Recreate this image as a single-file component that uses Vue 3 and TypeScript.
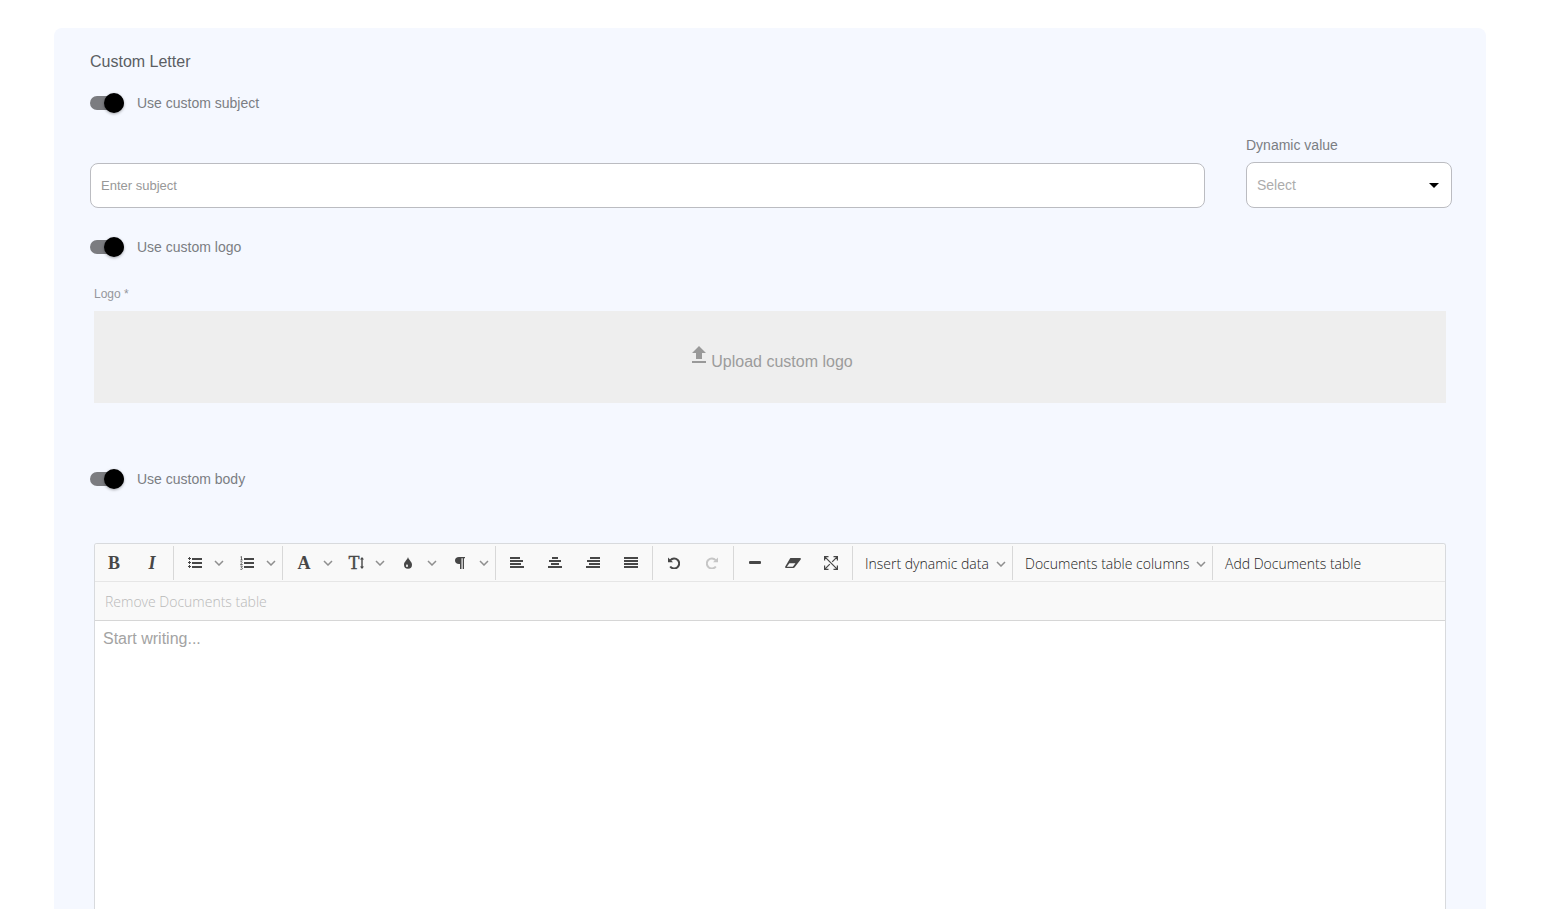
<script setup lang="ts">
import { ref } from 'vue'

interface Tool {
  id: string
  label: string
  split?: boolean
  disabled?: boolean
}

const useSubject = ref(true)
const useLogo = ref(true)
const useBody = ref(true)
const subject = ref('')
const dynamicValue = ref('')
const body = ref('')

const groups: Tool[][] = [
  [
    { id: 'bold', label: 'Bold' },
    { id: 'italic', label: 'Italic' },
  ],
  [
    { id: 'bullets', label: 'Bulleted list', split: true },
    { id: 'numbers', label: 'Numbered list', split: true },
  ],
  [
    { id: 'font', label: 'Font family', split: true },
    { id: 'size', label: 'Font size', split: true },
    { id: 'color', label: 'Colors', split: true },
    { id: 'paragraph', label: 'Paragraph format', split: true },
  ],
  [
    { id: 'left', label: 'Align left' },
    { id: 'center', label: 'Align center' },
    { id: 'right', label: 'Align right' },
    { id: 'justify', label: 'Justify' },
  ],
  [
    { id: 'undo', label: 'Undo' },
    { id: 'redo', label: 'Redo', disabled: true },
  ],
  [
    { id: 'rule', label: 'Horizontal line' },
    { id: 'eraser', label: 'Clear formatting' },
    { id: 'expand', label: 'Fullscreen' },
  ],
]

const letters: Record<string, string> = { bold: 'B', italic: 'I', font: 'A' }

const bars: Record<string, string> = {
  bullets: 'M1 0h1v1h1v1h-1v1h-1v-1h-1v-1h1zM1 4h1v1h1v1h-1v1h-1v-1h-1v-1h1zM1 8h1v1h1v1h-1v1h-1v-1h-1v-1h1zM4 1h10v2H4zM4 5h10v2H4zM4 9h10v2H4z',
  left: 'M0 0h10v2H0zM0 3h13v2H0zM0 6h11v2H0zM0 9h14v2H0z',
  center: 'M4 0h6v2H4zM1 3h12v2H1zM3 6h8v2H3zM0 9h14v2H0z',
  right: 'M4 0h10v2H4zM1 3h13v2H1zM3 6h11v2H3zM0 9h14v2H0z',
  justify: 'M0 0h14v2H0zM0 3h14v2H0zM0 6h14v2H0zM0 9h14v2H0z',
}
</script>

<template>
  <main class="page">
    <section class="card">
      <h1 class="title">Custom Letter</h1>

      <label class="toggle">
        <input v-model="useSubject" type="checkbox" role="switch" />
        <span>Use custom subject</span>
      </label>

      <div class="subject-row">
        <input v-model="subject" class="subject" type="text" placeholder="Enter subject" aria-label="Subject" />
        <div class="field">
          <label for="dynamic">Dynamic value</label>
          <div class="select-box">
            <select id="dynamic" v-model="dynamicValue">
              <option value="">Select</option>
            </select>
            <svg class="caret" width="10" height="5" viewBox="0 0 10 5"><path d="M0 0h10L5 5z" /></svg>
          </div>
        </div>
      </div>

      <label class="toggle toggle-logo">
        <input v-model="useLogo" type="checkbox" role="switch" />
        <span>Use custom logo</span>
      </label>

      <div class="logo-block">
        <span id="logo-label" class="logo-label">Logo *</span>
        <button class="upload" type="button" aria-describedby="logo-label">
          <svg width="24" height="24" viewBox="0 0 24 24"><path d="M9 16h6v-6h4l-7-7-7 7h4zM5 18h14v2H5z" /></svg>
          <span>Upload custom logo</span>
        </button>
      </div>

      <label class="toggle toggle-body">
        <input v-model="useBody" type="checkbox" role="switch" />
        <span>Use custom body</span>
      </label>

      <div class="editor">
        <div class="toolbar" role="toolbar" aria-label="Formatting">
          <div v-for="(group, g) in groups" :key="g" class="group">
            <template v-for="tool in group" :key="tool.id">
              <button class="tool" type="button" :aria-label="tool.label" :disabled="tool.disabled">
                <span v-if="letters[tool.id]" :class="['letter', tool.id]">{{ letters[tool.id] }}</span>
                <svg v-else-if="bars[tool.id]" width="14" height="11" viewBox="0 0 14 11" shape-rendering="crispEdges">
                  <path :d="bars[tool.id]" />
                </svg>
                <svg v-else-if="tool.id === 'numbers'" width="14" height="14" viewBox="0 0 14 14">
                  <path d="M4 2h10v2H4zM4 6h10v2H4zM4 10h10v2H4z" />
                  <path class="thin" d="M.5 1 1.500.5V4M.4 4h2.300M.3 5.900c.6-.7 2-.5 1.800.4C2 7 .9 7.700.5 8.500h2.200M.4 10.100h2L1.300 11.500c1.500 0 1.500 2-.1 2-.4 0-.700-.1-.9-.3" />
                </svg>
                <span v-else-if="tool.id === 'size'" class="sizes">
                  <span class="letter size">T</span>
                  <svg width="4" height="12" viewBox="0 0 4 12"><path d="M2 0l2 2.500H2.700v7H4L2 12 0 9.500h1.300v-7H0z" /></svg>
                </span>
                <svg v-else-if="tool.id === 'color'" width="8" height="12" viewBox="0 0 8 12">
                  <path fill-rule="evenodd" d="M4 0c.5 2.600 4 4.700 4 7.700a4 4 0 0 1-8 0C0 4.700 3.500 2.600 4 0zM3 7c-.5.700-1 1.200-1 1.900a1 1 0 0 0 2 0C4 8.200 3.400 7.700 3 7z" />
                </svg>
                <svg v-else-if="tool.id === 'paragraph'" width="10" height="12" viewBox="0 0 10 12">
                  <path d="M10 0v1.200H9V12H7.700V1.200H6.500V12H5V7H4C1.500 7 0 5.500 0 3.500S1.500 0 4 0z" />
                </svg>
                <svg v-else-if="tool.id === 'undo' || tool.id === 'redo'" :class="{ flip: tool.id === 'redo' }" width="12" height="12" viewBox="0 0 12 12">
                  <path class="thick" d="M2.400 3.200A5 5 0 1 1 2.200 9.500" />
                  <path d="M0 .5v4.800h5z" />
                </svg>
                <svg v-else-if="tool.id === 'rule'" width="12" height="3" viewBox="0 0 12 3"><rect width="12" height="3" rx="1" /></svg>
                <svg v-else-if="tool.id === 'eraser'" width="16" height="10" viewBox="0 0 16 10">
                  <path fill-rule="evenodd" d="M6 0h9c.8 0 1.200.8.700 1.400L9.500 9.500c-.3.300-.6.500-1 .5H1c-.9 0-1.200-.8-.700-1.400L5 .5C5.300.1 5.500 0 6 0zM4.400 5.200 1.800 8.800h6L10.500 5.200z" />
                </svg>
                <svg v-else width="14" height="14" viewBox="0 0 14 14">
                  <path class="line" d="M.6 4.500V.6H4.500M9.500.6h3.900V4.500M13.400 9.500v3.900H9.500M4.500 13.400H.6V9.500M.6.6l12.800 12.800M13.400.6 8.200 5.800M5.800 8.200.6 13.400" />
                </svg>
              </button>
              <button v-if="tool.split" class="more" type="button" :aria-label="tool.label + ' options'">
                <svg class="chevron" width="10" height="6" viewBox="0 0 10 6"><path d="M1 1l4 4 4-4" /></svg>
              </button>
            </template>
          </div>
          <div class="group">
            <button class="menu menu-data" type="button">
              Insert dynamic data
              <svg class="chevron" width="10" height="6" viewBox="0 0 10 6"><path d="M1 1l4 4 4-4" /></svg>
            </button>
          </div>
          <div class="group">
            <button class="menu menu-columns" type="button">
              Documents table columns
              <svg class="chevron" width="10" height="6" viewBox="0 0 10 6"><path d="M1 1l4 4 4-4" /></svg>
            </button>
          </div>
          <div class="group last">
            <button class="menu" type="button">Add Documents table</button>
          </div>
        </div>
        <div class="toolbar second">
          <button class="menu" type="button" disabled>Remove Documents table</button>
        </div>
        <textarea v-model="body" placeholder="Start writing..." aria-label="Letter body"></textarea>
      </div>
    </section>
  </main>
</template>

<style>
body {
  margin: 0;
  background: #fff;
}
</style>

<style scoped>
* {
  box-sizing: border-box;
}
.page {
  display: flex;
  min-height: 100vh;
  padding: 28px 57px 0 54px;
  font-family: "Liberation Sans", Arial, sans-serif;
  font-size: 14px;
  line-height: 18px;
  color: #7b7e83;
}
button,
input,
select,
textarea {
  font: inherit;
  margin: 0;
}
svg {
  display: block;
  flex: none;
}
.card {
  flex: 1;
  display: flex;
  flex-direction: column;
  min-width: 0;
  padding: 25px 34px 0 36px;
  background: #f5f8ff;
  border-radius: 8px 8px 0 0;
}
.title {
  margin: 0 0 22px;
  font-size: 16px;
  font-weight: 400;
  color: #5b5e63;
}
.toggle {
  display: flex;
  align-items: center;
  align-self: flex-start;
  gap: 13px;
  height: 20px;
}
.toggle input {
  appearance: none;
  position: relative;
  width: 34px;
  height: 14px;
  border-radius: 7px;
  background: #7b7c80;
}
.toggle input::after {
  content: "";
  position: absolute;
  top: -3px;
  right: 0;
  width: 20px;
  height: 20px;
  border-radius: 50%;
  background: #000;
  box-shadow: 0 1px 3px rgba(0, 0, 0, 0.35);
}
.toggle input:not(:checked)::after {
  right: 14px;
}
.toggle-logo {
  margin-top: 29px;
}
.toggle-body {
  margin-top: 66px;
}
.subject-row {
  display: grid;
  grid-template-columns: 1fr 206px;
  gap: 41px;
  align-items: end;
  margin-top: 23px;
}
.subject,
select {
  width: 100%;
  border: 1px solid #bbbcc1;
  border-radius: 8px;
  background: #fff;
  padding: 0 10px;
}
.subject {
  height: 45px;
  font-size: 13px;
}
.subject::placeholder {
  color: #989898;
  opacity: 1;
}
.field {
  display: flex;
  flex-direction: column;
  gap: 8px;
}
.select-box {
  position: relative;
}
select {
  appearance: none;
  display: block;
  height: 46px;
  color: #acacac;
}
.caret {
  position: absolute;
  top: 21px;
  right: 13px;
  pointer-events: none;
}
.logo-block {
  margin: 29px 6px 0 4px;
}
.logo-label {
  display: block;
  margin-bottom: 9px;
  font-size: 12px;
  line-height: 16px;
  color: #94969c;
}
.upload {
  display: flex;
  align-items: center;
  justify-content: center;
  width: 100%;
  height: 92px;
  padding: 0;
  border: 0;
  background: #eee;
  color: #9c9c9c;
  font-size: 16px;
}
.upload svg {
  fill: #999;
  margin-bottom: 4px;
}
.upload span {
  padding-top: 10px;
}
.editor {
  flex: 1;
  display: flex;
  flex-direction: column;
  margin: 54px 6px 0 4px;
  border: 1px solid #d8dadd;
  border-bottom: 0;
  border-radius: 3px 3px 0 0;
  background: #fff;
}
.toolbar {
  display: flex;
  align-items: center;
  height: 38px;
  border-bottom: 1px solid #e6e6e6;
  background: #f9f9f9;
  border-radius: 2px 2px 0 0;
}
.second {
  height: 39px;
  border-bottom-color: #d6d6d6;
  border-radius: 0;
}
.group {
  display: flex;
  height: 34px;
  padding: 0 2px;
  border-right: 1px solid #d8d8d8;
}
.group:first-child {
  padding-left: 0;
}
.group.last {
  border-right: 0;
}
.toolbar button {
  display: flex;
  align-items: center;
  justify-content: center;
  height: 34px;
  padding: 0;
  border: 0;
  background: transparent;
}
.toolbar .tool {
  width: 38px;
  color: #474747;
}
.tool svg {
  fill: #474747;
}
.tool:disabled svg {
  fill: #c6c6c6;
}
.tool .thick {
  fill: none;
  stroke: #474747;
  stroke-width: 2;
}
.tool:disabled .thick {
  stroke: #c6c6c6;
}
.tool .thin {
  fill: none;
  stroke: #474747;
  stroke-width: 0.8;
}
.tool .line {
  fill: none;
  stroke: #474747;
  stroke-width: 1.2;
}
.flip {
  transform: scaleX(-1);
}
.letter {
  font-family: "Liberation Serif", serif;
  font-size: 18px;
  font-weight: 700;
}
.letter.italic {
  font-style: italic;
}
.letter.size {
  font-weight: 400;
  -webkit-text-stroke: 0.4px #474747;
}
.sizes {
  display: flex;
  align-items: center;
}
.toolbar .more {
  width: 14px;
  justify-content: flex-start;
}
.chevron {
  fill: none;
  stroke: #8f8f8f;
  stroke-width: 1.5;
}
.toolbar .menu {
  padding: 2px 10px 0;
  font-family: "Open Sans", "Noto Sans", sans-serif;
  font-weight: 300;
  color: #1c1c1c;
  white-space: nowrap;
}
.toolbar .menu-data,
.toolbar .menu-columns {
  justify-content: space-between;
  padding-right: 4px;
}
.menu-data {
  width: 155px;
}
.menu-columns {
  width: 195px;
}
.toolbar .menu:disabled {
  color: #b8b8b8;
}
textarea {
  flex: 1;
  width: 100%;
  padding: 9px 8px;
  border: 0;
  outline: 0;
  resize: none;
  background: transparent;
  font-size: 16px;
  color: #444;
}
textarea::placeholder {
  color: #a3a3a3;
  opacity: 1;
}
</style>
